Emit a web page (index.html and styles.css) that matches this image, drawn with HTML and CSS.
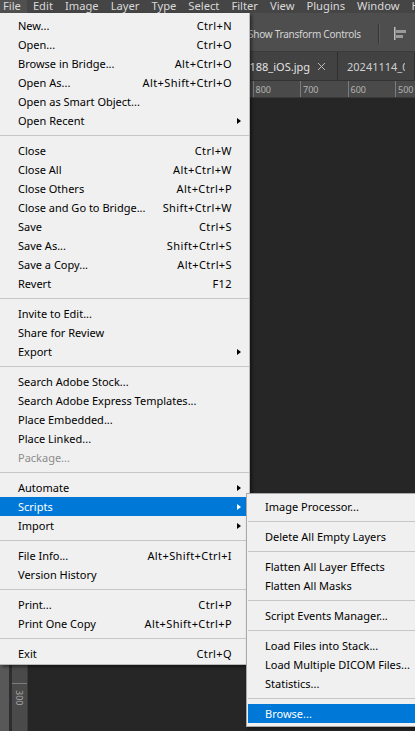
FILE: index.html
```html
<!DOCTYPE html>
<html lang="en">
<head>
<meta charset="utf-8">
<title>Photoshop File menu</title>
<link rel="stylesheet" href="styles.css">
</head>
<body>
<div class="app">
  <div class="menubar">
    <span class="mb-item active">File</span>
    <span class="mb-item">Edit</span>
    <span class="mb-item">Image</span>
    <span class="mb-item">Layer</span>
    <span class="mb-item">Type</span>
    <span class="mb-item">Select</span>
    <span class="mb-item">Filter</span>
    <span class="mb-item">View</span>
    <span class="mb-item">Plugins</span>
    <span class="mb-item">Window</span>
    <span class="mb-item">Help</span>
  </div>

  <div class="options">
    <span class="opt-check"></span>
    <span class="opt-label">Show Transform Controls</span>
    <span class="opt-sep"></span>
    <svg class="opt-icon" width="14" height="14" viewBox="0 0 14 14">
      <rect x="1" y="0" width="1.5" height="13" fill="#bdbdbd"/>
      <rect x="3" y="3" width="10" height="3" fill="#9a9a9a"/>
      <rect x="3" y="8" width="7" height="3" fill="#9a9a9a"/>
    </svg>
  </div>

  <div class="tabs">
    <div class="tab tab-active">
      <span class="tab-name">188_iOS.jpg</span>
      <svg class="tab-close" width="9" height="9" viewBox="0 0 9 9">
        <path d="M1 1 L8 8 M8 1 L1 8" stroke="#bdbdbd" stroke-width="1" fill="none"/>
      </svg>
    </div>
    <div class="tab">
      <span class="tab-name">20241114_070188.jpg</span>
    </div>
  </div>

  <div class="work">
    <div class="toolbar"></div>
    <div class="doc">
      <div class="hruler-row">
        <div class="corner"></div>
        <div class="hruler">
          <span class="hr-lead"></span>
          <span class="hr-cell"></span>
          <span class="hr-cell"></span>
          <span class="hr-cell"></span>
          <span class="hr-cell"></span>
          <span class="hr-cell">800</span>
          <span class="hr-cell">700</span>
          <span class="hr-cell">600</span>
          <span class="hr-cell">500</span>
          <span class="hr-cell">400</span>
        </div>
      </div>
      <div class="doc-body">
        <div class="vruler">
          <span class="vr-lead"></span>
          <span class="vr-cell"></span>
          <span class="vr-cell"></span>
          <span class="vr-cell"></span>
          <span class="vr-cell"></span>
          <span class="vr-cell"></span>
          <span class="vr-cell"></span>
          <span class="vr-cell"></span>
          <span class="vr-cell"></span>
          <span class="vr-cell"></span>
          <span class="vr-cell"></span>
          <span class="vr-cell"></span>
          <span class="vr-cell"></span>
          <span class="vr-cell">300</span>
        </div>
        <div class="canvas"></div>
      </div>
    </div>
  </div>

  <div class="menu file-menu">
    <div class="mi"><span>New...</span><span class="sc">Ctrl+N</span><span></span></div>
    <div class="mi"><span>Open...</span><span class="sc">Ctrl+O</span><span></span></div>
    <div class="mi"><span>Browse in Bridge...</span><span class="sc">Alt+Ctrl+O</span><span></span></div>
    <div class="mi"><span>Open As...</span><span class="sc">Alt+Shift+Ctrl+O</span><span></span></div>
    <div class="mi"><span>Open as Smart Object...</span><span class="sc"></span><span></span></div>
    <div class="mi"><span>Open Recent</span><span class="sc"></span><span class="sub"><i class="arrow"></i></span></div>
    <div class="sep"></div>
    <div class="mi"><span>Close</span><span class="sc">Ctrl+W</span><span></span></div>
    <div class="mi"><span>Close All</span><span class="sc">Alt+Ctrl+W</span><span></span></div>
    <div class="mi"><span>Close Others</span><span class="sc">Alt+Ctrl+P</span><span></span></div>
    <div class="mi"><span>Close and Go to Bridge...</span><span class="sc">Shift+Ctrl+W</span><span></span></div>
    <div class="mi"><span>Save</span><span class="sc">Ctrl+S</span><span></span></div>
    <div class="mi"><span>Save As...</span><span class="sc">Shift+Ctrl+S</span><span></span></div>
    <div class="mi"><span>Save a Copy...</span><span class="sc">Alt+Ctrl+S</span><span></span></div>
    <div class="mi"><span>Revert</span><span class="sc">F12</span><span></span></div>
    <div class="sep"></div>
    <div class="mi"><span>Invite to Edit...</span><span class="sc"></span><span></span></div>
    <div class="mi"><span>Share for Review</span><span class="sc"></span><span></span></div>
    <div class="mi"><span>Export</span><span class="sc"></span><span class="sub"><i class="arrow"></i></span></div>
    <div class="sep"></div>
    <div class="mi"><span>Search Adobe Stock...</span><span class="sc"></span><span></span></div>
    <div class="mi"><span>Search Adobe Express Templates...</span><span class="sc"></span><span></span></div>
    <div class="mi"><span>Place Embedded...</span><span class="sc"></span><span></span></div>
    <div class="mi"><span>Place Linked...</span><span class="sc"></span><span></span></div>
    <div class="mi disabled"><span>Package...</span><span class="sc"></span><span></span></div>
    <div class="sep"></div>
    <div class="mi"><span>Automate</span><span class="sc"></span><span class="sub"><i class="arrow"></i></span></div>
    <div class="mi hl"><span>Scripts</span><span class="sc"></span><span class="sub"><i class="arrow"></i></span></div>
    <div class="mi"><span>Import</span><span class="sc"></span><span class="sub"><i class="arrow"></i></span></div>
    <div class="sep"></div>
    <div class="mi"><span>File Info...</span><span class="sc">Alt+Shift+Ctrl+I</span><span></span></div>
    <div class="mi"><span>Version History</span><span class="sc"></span><span></span></div>
    <div class="sep"></div>
    <div class="mi"><span>Print...</span><span class="sc">Ctrl+P</span><span></span></div>
    <div class="mi"><span>Print One Copy</span><span class="sc">Alt+Shift+Ctrl+P</span><span></span></div>
    <div class="sep"></div>
    <div class="mi"><span>Exit</span><span class="sc">Ctrl+Q</span><span></span></div>
  </div>

  <div class="menu sub-menu">
    <div class="si">Image Processor...</div>
    <div class="sep"></div>
    <div class="si">Delete All Empty Layers</div>
    <div class="sep"></div>
    <div class="si">Flatten All Layer Effects</div>
    <div class="si">Flatten All Masks</div>
    <div class="sep"></div>
    <div class="si">Script Events Manager...</div>
    <div class="sep"></div>
    <div class="si">Load Files into Stack...</div>
    <div class="si">Load Multiple DICOM Files...</div>
    <div class="si">Statistics...</div>
    <div class="sep"></div>
    <div class="si hl">Browse...</div>
  </div>
</div>
</body>
</html>
```

FILE: styles.css
```css
* {
  box-sizing: border-box;
  margin: 0;
  padding: 0;
}

html,
body {
  width: 415px;
  height: 731px;
  overflow: hidden;
}

body {
  background: #262626;
  font-family: "Noto Sans", "Open Sans", sans-serif;
}

.app {
  position: relative;
  width: 415px;
  height: 731px;
  display: flex;
  flex-direction: column;
  overflow: hidden;
}

/* ---------- menubar ---------- */
.menubar {
  flex: 0 0 13px;
  display: flex;
  align-items: stretch;
  background: #454545;
  color: #d9d9d9;
  font-size: 11.2px;
  line-height: 11px;
  white-space: nowrap;
}

.mb-item {
  padding: 0 6px;
}

.mb-item.active {
  padding-left: 3px;
  background: #505050;
}

/* ---------- options bar ---------- */
.options {
  flex: 0 0 39px;
  display: flex;
  align-items: center;
  padding-left: 233px;
  padding-top: 3px;
  background: #4e4e4e;
  border-bottom: 1px solid #3a3a3a;
  white-space: nowrap;
}

.opt-check {
  width: 11px;
  height: 11px;
  border: 1px solid #8a8a8a;
  margin-right: 4px;
}

.opt-label {
  font-size: 10px;
  letter-spacing: -0.25px;
  color: #d4d4d4;
}

.opt-sep {
  width: 2px;
  height: 20px;
  margin-left: 17px;
  border-left: 1px solid #353535;
  border-right: 1px solid #5c5c5c;
}

.opt-icon {
  margin-left: 13px;
}

/* ---------- document tabs ---------- */
.tabs {
  flex: 0 0 28px;
  display: flex;
  background: #3a3a3a;
  white-space: nowrap;
  overflow: hidden;
}

.tab {
  display: flex;
  align-items: center;
  gap: 7px;
  background: #424242;
  border-right: 1px solid #2f2f2f;
  color: #cfcfcf;
  font-size: 11px;
  padding: 0 9px;
  overflow: hidden;
}

.tab-active {
  flex: 0 0 338px;
  justify-content: flex-end;
  padding-right: 11px;
  color: #e2e2e2;
}

.tab-name {
  overflow: hidden;
}

.tab-close {
  flex: 0 0 9px;
}

/* ---------- work area ---------- */
.work {
  flex: 1;
  display: flex;
  min-height: 0;
}

.toolbar {
  flex: 0 0 12px;
  background: #585858;
  border-right: 3px solid #2e2e2e;
}

.doc {
  flex: 1;
  display: flex;
  flex-direction: column;
  min-width: 0;
}

.hruler-row {
  flex: 0 0 17px;
  display: flex;
  background: #4a4a4a;
  border-top: 1px solid #333;
  border-bottom: 1px solid #3a3a3a;
}

.corner {
  flex: 0 0 16px;
  border-right: 1px solid #3a3a3a;
}

.hruler {
  flex: 1;
  display: flex;
  overflow: hidden;
  color: #b3b3b3;
  font-size: 9px;
  line-height: 15px;
  white-space: nowrap;
}

.hr-lead {
  flex: 0 0 34.5px;
}

.hr-cell {
  flex: 0 0 47.5px;
  border-left: 1px solid #7c7c7c;
  padding-left: 2px;
  padding-top: 1px;
}

.doc-body {
  flex: 1;
  display: flex;
  min-height: 0;
}

.vruler {
  flex: 0 0 16px;
  display: flex;
  flex-direction: column;
  background: #4a4a4a;
  border-right: 1px solid #3a3a3a;
  overflow: hidden;
  color: #a8a8a8;
  font-size: 9px;
}

.vr-lead {
  flex: 0 0 15px;
}

.vr-cell {
  flex: 0 0 47.5px;
  border-top: 1px solid #7c7c7c;
  writing-mode: vertical-rl;
  padding-top: 6px;
  line-height: 15px;
}

.canvas {
  flex: 1;
  background: #262626;
}

/* ---------- menus ---------- */
.menu {
  position: absolute;
  background: #f0f0f0;
  color: #000;
  font-size: 11px;
  white-space: nowrap;
  box-shadow: 2px 2px 3px rgba(0, 0, 0, 0.45);
}

.file-menu {
  left: 0;
  top: 13px;
  width: 250px;
  padding: 3px 0 1px;
  border-right: 1px solid #b9b9b9;
  border-bottom: 1px solid #b9b9b9;
}

.mi {
  display: grid;
  grid-template-columns: 1fr auto 17px;
  height: 19px;
  line-height: 19px;
  padding-left: 18px;
}

.sc {
  text-align: right;
  letter-spacing: 0.4px;
}

.sub {
  display: flex;
  align-items: center;
  padding-left: 5px;
}

.arrow {
  width: 0;
  height: 0;
  border-left: 4px solid #000;
  border-top: 3.5px solid transparent;
  border-bottom: 3.5px solid transparent;
}

.mi.hl,
.si.hl {
  background: #0078d7;
  color: #fff;
}

.mi.hl .arrow {
  border-left-color: #fff;
}

.mi.disabled {
  color: #8c8c8c;
}

.sep {
  height: 11px;
  display: flex;
  align-items: center;
}

.sep::before {
  content: "";
  flex: 1;
  height: 1px;
  background: #c6c6c6;
}

.sub-menu {
  left: 246px;
  top: 493px;
  width: 190px;
  padding: 3px 1px;
  border: 1px solid #a9a9a9;
}

.si {
  height: 19px;
  line-height: 19px;
  padding-left: 17px;
}
```
